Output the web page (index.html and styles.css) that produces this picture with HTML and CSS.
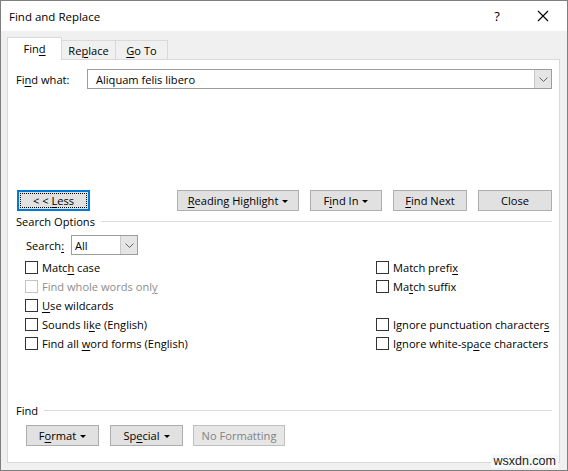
FILE: index.html
```html
<!DOCTYPE html>
<html>
<head>
<meta charset="utf-8">
<link rel="stylesheet" href="styles.css">
</head>
<body>
<div class="window">
  <div class="titlebar">
    <span class="title">Find and Replace</span>
    <span class="help">?</span>
    <span class="close"><svg width="12" height="12" viewBox="0 0 12 12"><path d="M1 1 L11 11 M11 1 L1 11" stroke="#000" stroke-width="1.1" fill="none"/></svg></span>
  </div>
  <div class="body">
    <div class="tabs">
      <div class="tab active"><span>Fin<u>d</u></span></div>
      <div class="tab"><span>Re<u>p</u>lace</span></div>
      <div class="tab"><span><u>G</u>o To</span></div>
    </div>
    <div class="panel">
      <div class="findwhat">
        <span class="fw-label">Fi<u>n</u>d what:</span>
        <div class="combo">
          <span class="combo-text">Aliquam felis libero</span>
          <span class="combo-drop"><svg width="9" height="5" viewBox="0 0 9 5"><path d="M0.5 0.5 L4.5 4.5 L8.5 0.5" stroke="#606060" fill="none" stroke-width="1"/></svg></span>
        </div>
      </div>
      <div class="btnrow">
        <button class="btn less"><span class="focus"><span>&lt; &lt; <u>L</u>ess</span></span></button>
        <div class="btn-right">
          <button class="btn w122"><span><u>R</u>eading Highlight</span><i class="tri"></i></button>
          <button class="btn w72"><span>F<u>i</u>nd In</span><i class="tri"></i></button>
          <button class="btn w74"><span><u>F</u>ind Next</span></button>
          <button class="btn w74"><span>Close</span></button>
        </div>
      </div>
      <div class="group so"><span>Search Options</span></div>
      <div class="search-row">
        <span class="search-label">Search<u>:</u></span>
        <div class="select">
          <span class="select-text">All</span>
          <span class="select-drop"><svg width="9" height="5" viewBox="0 0 9 5"><path d="M0.5 0.5 L4.5 4.5 L8.5 0.5" stroke="#606060" fill="none" stroke-width="1"/></svg></span>
        </div>
      </div>
      <div class="options">
        <div class="col left">
          <div class="opt"><span class="cb"></span><span>Matc<u>h</u> case</span></div>
          <div class="opt disabled"><span class="cb"></span><span>Find whole words onl<u>y</u></span></div>
          <div class="opt"><span class="cb"></span><span><u>U</u>se wildcards</span></div>
          <div class="opt"><span class="cb"></span><span>Sounds li<u>k</u>e (English)</span></div>
          <div class="opt"><span class="cb"></span><span>Find all <u>w</u>ord forms (English)</span></div>
        </div>
        <div class="col right">
          <div class="opt"><span class="cb"></span><span>Match prefi<u>x</u></span></div>
          <div class="opt"><span class="cb"></span><span>Ma<u>t</u>ch suffix</span></div>
          <div class="opt empty"></div>
          <div class="opt"><span class="cb"></span><span>Ignore punctuation character<u>s</u></span></div>
          <div class="opt"><span class="cb"></span><span>Ignore white-sp<u>a</u>ce characters</span></div>
        </div>
      </div>
      <div class="group fg"><span>Find</span></div>
      <div class="fmtrow">
        <button class="btn w73"><span>F<u>o</u>rmat</span><i class="tri"></i></button>
        <button class="btn w73"><span>Sp<u>e</u>cial</span><i class="tri"></i></button>
        <button class="btn w92 dis"><span>No Formatting</span></button>
      </div>
    </div>
  </div>
  <div class="watermark">wsxdn.com</div>
</div>
</body>
</html>
```

FILE: styles.css
```css
* { box-sizing: border-box; }
html, body { margin: 0; padding: 0; background: #f0f0f0; }
body {
  font-family: "Open Sans", "Noto Sans", sans-serif;
  font-size: 11.1px;
  color: #000;
}
u { text-decoration: underline; text-underline-offset: 2px; text-decoration-thickness: 1px; }
.window {
  position: relative;
  width: 568px;
  height: 471px;
  border: 1px solid #7f7f7f;
  background: #f0f0f0;
  overflow: hidden;
}
.titlebar {
  height: 30px;
  background: #fff;
  display: flex;
  align-items: center;
  padding-left: 8px;
}
.title { font-size: 11.5px; flex: 1; }
.help { font-size: 13px; width: 46px; text-align: center; }
.close { width: 46px; display: flex; justify-content: center; margin-right: 1px; }

.body { padding: 6px 7px 0 6px; }
.tabs { display: flex; align-items: flex-end; height: 22px; position: relative; z-index: 2; }
.tab {
  height: 19px;
  border: 1px solid #d9d9d9;
  border-bottom: none;
  background: #f0f0f0;
  display: flex;
  align-items: center;
  justify-content: center;
  margin-left: -1px;
}
.tab:nth-child(2) { width: 55px; }
.tab:nth-child(3) { width: 53px; }
.tab.active {
  width: 55px;
  background: #fff;
  margin-left: 0;
  margin-bottom: -1px;
  height: 23px;
  padding-bottom: 1px;
}
.panel {
  background: #fff;
  border: 1px solid #d9d9d9;
  height: 404px;
  padding: 0 7px 0 8px;
  position: relative;
  z-index: 1;
}
.findwhat { display: flex; align-items: center; margin-top: 9px; height: 20px; }
.fw-label { width: 71px; }
.combo {
  flex: 1;
  height: 20px;
  border: 1px solid #9c9c9c;
  display: flex;
  align-items: center;
}
.combo-text { flex: 1; padding-left: 8px; }
.combo-drop, .select-drop {
  width: 17px;
  height: 18px;
  background: #e5e5e5;
  border-left: 1px solid #c8c8c8;
  display: flex;
  align-items: center;
  justify-content: center;
}
.btnrow { display: flex; margin-top: 101px; }
.btn {
  font-family: inherit;
  font-size: 11.1px;
  height: 21px;
  background: #e1e1e1;
  border: 1px solid #adadad;
  padding: 0;
  color: #000;
  display: flex;
  align-items: center;
  justify-content: center;
  margin: 0;
  white-space: pre;
}
.btn.less {
  width: 73px;
  margin-left: 1px;
  border: 2px solid #0078d7;
  padding: 1px;
}
.btn.less .focus {
  width: 100%;
  height: 100%;
  border: 1px dotted #000;
  display: flex;
  align-items: center;
  justify-content: center;
}
.btn-right { margin-left: auto; display: flex; gap: 11px; }
.w122 { width: 122px; }
.w72 { width: 72px; }
.w73 { width: 73px; }
.w74 { width: 74px; }
.w92 { width: 92px; }
.tri {
  display: inline-block;
  width: 0; height: 0;
  border-left: 3px solid transparent;
  border-right: 3px solid transparent;
  border-top: 3px solid #000;
  margin-left: 4px;
  margin-top: 1px;
}
.btn.dis { color: #838383; background: #e6e6e6; border-color: #bfbfbf; }
.group { display: flex; align-items: center; height: 16px; }
.group::after {
  content: "";
  flex: 1;
  height: 1px;
  background: #dcdcdc;
  margin-left: 6px;
}
.group.so { margin-top: 2px; }
.search-row { display: flex; align-items: center; margin-top: 6px; height: 20px; padding-left: 10px; }
.search-label { width: 45px; }
.select {
  width: 67px;
  height: 20px;
  border: 1px solid #9c9c9c;
  display: flex;
  align-items: center;
}
.select-text { flex: 1; padding-left: 3px; }
.options { display: flex; margin-top: 3px; padding-left: 9px; }
.col { display: flex; flex-direction: column; }
.col.left { width: 351px; }
.opt { height: 19px; display: flex; align-items: center; white-space: pre; }
.cb {
  width: 13px;
  height: 13px;
  border: 1px solid #333;
  background: #fff;
  margin-right: 4px;
  flex: none;
}
.opt.disabled { color: #8d8d8d; }
.opt.disabled .cb { border-color: #c3c3c3; }
.group.fg { margin-top: 49px; }
.fmtrow { display: flex; margin-top: 7px; padding-left: 10px; gap: 11px; }
.fmtrow .w92 { margin-left: -1px; }
.watermark {
  position: absolute;
  right: 9px;
  bottom: 2px;
  font-family: "Liberation Sans", Arial, sans-serif;
  font-size: 12.5px;
  color: #222;
  background: #f8f8f8;
  padding: 0 2px;
  line-height: 14px;
  z-index: 3;
}
```
